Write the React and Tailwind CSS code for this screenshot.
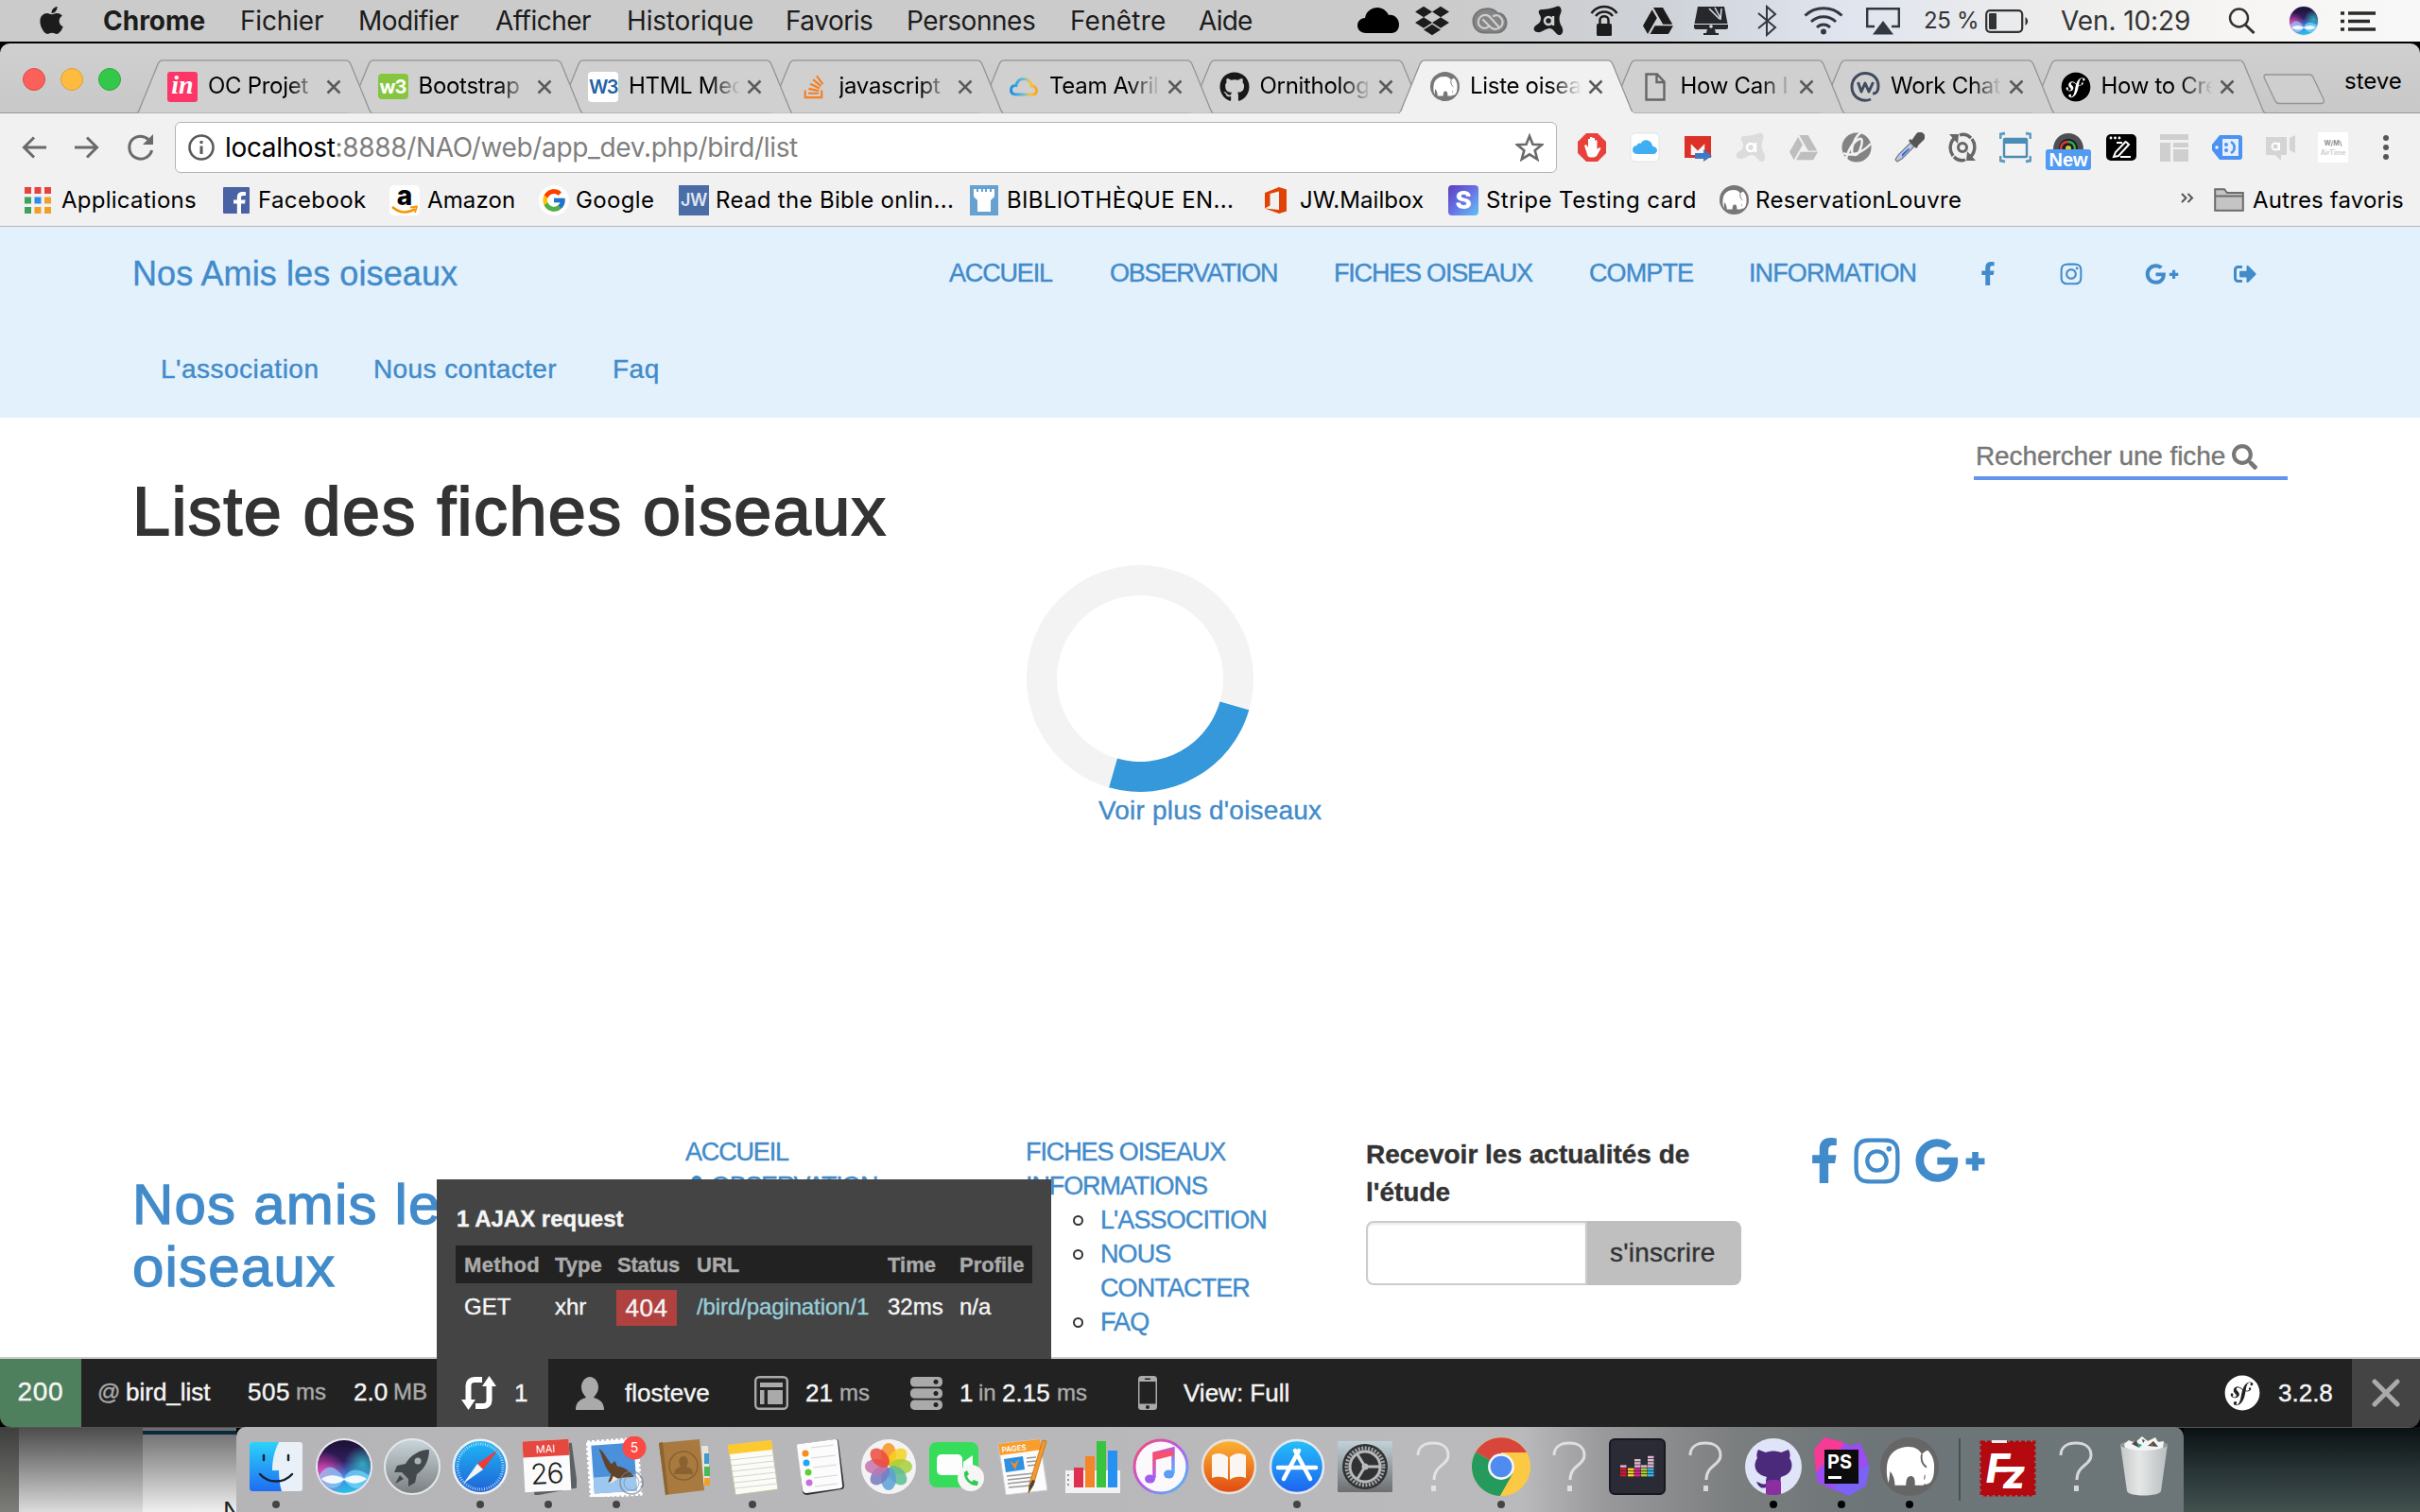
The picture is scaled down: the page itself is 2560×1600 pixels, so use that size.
import React from 'react';
import {
  FaApple, FaDropbox, FaGithub, FaStackOverflow, FaGoogleDrive, FaFacebookF,
  FaInstagram, FaGooglePlusG, FaSignOutAlt, FaSearch, FaSymfony, FaUser,
} from 'react-icons/fa';
import { FcGoogle } from 'react-icons/fc';

/* ---------- shared drawings ---------- */

function Svg({ w, h = w, vb, className = '', children }) {
  return (
    <svg width={w} height={h} viewBox={vb || `0 0 ${w} ${h}`} fill="none" className={`shrink-0 ${className}`}>
      {children}
    </svg>
  );
}

const ELEPHANT =
  'M14 78C11 68 10 55 12 44C15 26 30 16 48 16C60 16 67 21 71 29C74 25 78 23 81 22C89 29 93 42 92 52C92 66 89 78 80 80C75 81 68 78 68 74C72 75 77 73 77 67L76 62C75 66 74 74 74 82L59 82C60 72 58 66 52 66C46 66 44 72 44 82L25 82C25 72 22 64 17 58C16 62 16 70 14 78Z';

function Mamp({ size, disc = '#777' }) {
  return (
    <Svg w={size} vb="0 0 100 100">
      <circle cx="50" cy="50" r="50" fill={disc} />
      <path d={ELEPHANT} fill="#fff" />
      <path d="M71 29C69 38 72 46 79 51" stroke={disc} strokeWidth="3" />
    </Svg>
  );
}

function Siri({ size }) {
  return (
    <Svg w={size} vb="0 0 60 60">
      <defs>
        <linearGradient id="siriBg" x1="0" y1="0" x2="0" y2="1">
          <stop offset="0" stopColor="#1b1035" />
          <stop offset="0.4" stopColor="#33205f" />
          <stop offset="0.65" stopColor="#3d7fd8" />
          <stop offset="1" stopColor="#27c3e8" />
        </linearGradient>
        <radialGradient id="siriPink" cx="0.1" cy="0.65" r="0.45">
          <stop offset="0" stopColor="#ff3fb4" />
          <stop offset="1" stopColor="#ff3fb4" stopOpacity="0" />
        </radialGradient>
        <radialGradient id="siriTeal" cx="0.85" cy="0.45" r="0.35">
          <stop offset="0" stopColor="#2fc9d0" stopOpacity="0.8" />
          <stop offset="1" stopColor="#2fc9d0" stopOpacity="0" />
        </radialGradient>
      </defs>
      <circle cx="30" cy="30" r="30" fill="#e9e9ee" />
      <circle cx="30" cy="30" r="28" fill="url(#siriBg)" />
      <circle cx="30" cy="30" r="28" fill="url(#siriTeal)" />
      <circle cx="30" cy="30" r="28" fill="url(#siriPink)" />
      <path d="M3 40C12 26 20 28 30 42C36 30 48 32 57 40C54 46 50 50 46 53C40 54 34 50 30 44C24 54 16 54 12 51C8 48 5 44 3 40Z" fill="#7fdcff" opacity="0.65" />
      <path d="M6 43C13 38 22 38 30 43C38 38 47 38 54 43C46 49 38 49 30 44C22 50 13 49 6 43Z" fill="#fff" opacity="0.9" />
    </Svg>
  );
}

function SfDisc({ size }) {
  return (
    <span className="flex shrink-0 items-center justify-center rounded-full bg-white">
      <FaSymfony size={size} color="#000" />
    </span>
  );
}

/* ---------- menu bar ---------- */

function MenuBar() {
  return (
    <div className="flex h-[44px] shrink-0 items-center bg-[linear-gradient(to_right,#cbcbcb_0%,#cbcbcb_60%,#cfd3d9_69%,#dfe4ee_76%,#ececec_84%,#f6f5f3_92%,#f8f8f8_100%)] pl-[40px] text-[28px] leading-[44px] whitespace-nowrap text-[#1c1c1c]">
      <FaApple className="h-[33px] w-[29px] shrink-0 -translate-y-[1px]" />
      <span className="ml-[40px] w-[145px] font-bold">Chrome</span>
      <span className="w-[125px] tracking-[-0.16px]">Fichier</span>
      <span className="w-[145px] tracking-[-0.5px]">Modifier</span>
      <span className="w-[139px] tracking-[-0.5px]">Afficher</span>
      <span className="w-[168px] tracking-[-0.17px]">Historique</span>
      <span className="w-[128px] tracking-[-0.48px]">Favoris</span>
      <span className="w-[173px] tracking-[-0.45px]">Personnes</span>
      <span className="w-[136px] tracking-[0.19px]">Fenêtre</span>
      <span className="w-[168px] tracking-[-0.8px]">Aide</span>

      <Svg w={44} h={28}><path d="M9 27C3 27 0 23 0 19C0 14 4 11 8 11C9 4 15 0 21 0C27 0 31 4 33 8C39 7 44 12 44 18C44 23 41 27 36 27Z" fill="#000" /></Svg>
      <FaDropbox className="ml-[17px] h-[38px] w-[36px] shrink-0" />
      <Svg w={38} h={28} className="ml-[24px]">
        <path d="M14 1.500C20 0.500 25 3 27 6C33 6 36.500 11 36.500 16C36.500 22 32 26.500 26 26.500H13C6 26.500 1.500 21 1.500 14C1.500 8 6 2.500 14 1.500Z" fill="#858585" stroke="#757575" strokeWidth="2" />
        <path d="M28 20L20 11C17 7 12 7 9 10C6 13 6 18 9 20C12 23 16 22 18 20M12 13L20 21C23 24 28 23 31 20C33 17 33 13 30 10C28 8 25 8 23 9" stroke="#cfcfd0" strokeWidth="2.200" strokeLinecap="round" />
      </Svg>
      <Svg w={32} className="ml-[27px]">
        <path d="M24 1C28-1 31 3 29 8C27 12 27 17 30 22C33 27 30 32 27 31C23 30 22 24 17 24C13 24 9 29 4 28C-1 27 0 22 4 20C8 18 9 13 7 10C5 7 5 4 9 4C13 4 20 3 24 1Z" fill="#1c1c1c" />
        <circle cx="16" cy="16" r="4" stroke="#d0d2d6" strokeWidth="2.500" /><path d="M21 11V21" stroke="#d0d2d6" strokeWidth="2.500" />
      </Svg>
      <Svg w={30} h={34} className="ml-[28px]">
        <path d="M1.500 9C8-0.500 22-0.500 28.500 9M6 12C10.500 6 19.500 6 24 12" stroke="#1c1c1c" strokeWidth="2.500" />
        <rect x="7" y="20" width="16" height="13" rx="1.500" fill="#1c1c1c" /><path d="M10.500 20V16C10.500 11 19.500 11 19.500 16V20" stroke="#1c1c1c" strokeWidth="2.500" />
      </Svg>
      <FaGoogleDrive className="ml-[26px] h-[32px] w-[32px] shrink-0" />
      <Svg w={36} h={30} className="ml-[22px]">
        <path d="M4 0H32L35.500 18V20.500H0.500V18Z" fill="#26282c" /><path d="M29 2L28 14M16 2L27 13M22 1L28 12" stroke="#dce0e8" strokeWidth="1.500" />
        <path d="M0 18.500H36" stroke="#dce0e8" strokeWidth="1" /><path d="M0 19H36V22Q36 24 34 24H2Q0 24 0 22Z" fill="#26282c" /><circle cx="18" cy="21" r="1.800" fill="#dce0e8" /><path d="M14 24H22L23 28H26V30H10V28H13Z" fill="#26282c" />
      </Svg>
      <Svg w={22} h={34} className="ml-[30px]"><path d="M2 9L20 24L11 32V2L20 10L2 25" stroke="#333740" strokeWidth="2" /></Svg>
      <Svg w={42} h={30} className="ml-[28px]">
        <path d="M1.500 9.500C12-1 30-1 40.500 9.500M8 16C15 9 27 9 34 16M14 22C18 18 24 18 28 22" stroke="#333740" strokeWidth="3" /><circle cx="21" cy="26.500" r="3" fill="#333740" />
      </Svg>
      <Svg w={36} h={29} className="ml-[24px]"><path d="M9 20H1.200V1.200H34.800V20H27" stroke="#333740" strokeWidth="2.400" /><path d="M18 14L29 28.500H7Z" fill="#333740" /></Svg>
      <span className="ml-[25px] w-[64px] text-[24px] tracking-[-0.33px] text-[#333]">25 %</span>
      <Svg w={46} h={25} className="ml-[1px]"><rect x="1.200" y="1.200" width="38" height="22.600" rx="4" stroke="#333" strokeWidth="2.200" /><rect x="4" y="4" width="8" height="17" rx="1" fill="#333" /><path d="M42.500 8C46 10 46 15 42.500 17Z" fill="#333" /></Svg>
      <span className="ml-[34px] w-[177px] tracking-[-0.1px] text-[#333]">Ven. 10:29</span>
      <Svg w={29} h={28}><circle cx="11.500" cy="11" r="9.500" stroke="#333" strokeWidth="2.400" /><path d="M18 18L27.500 27" stroke="#333" strokeWidth="3" /></Svg>
      <span className="ml-[35px]"><Siri size={32} /></span>
      <Svg w={37} h={21} className="ml-[23px]"><path d="M0 2H4M8 2H37M0 10.500H4M8 10.500H31M0 19H4M8 19H37" stroke="#2a2a2a" strokeWidth="3.600" /></Svg>
    </div>
  );
}

/* ---------- tabs ---------- */

const W3Schools = () => (
  <span className="flex h-[27px] w-[32px] items-center justify-center rounded-[4px] bg-[#87c540] text-[20px] leading-none font-bold tracking-[-1px] text-white">w3</span>
);
const tabs = [
  { t: 'OC Projet', i: <span className="flex size-8 items-center justify-center rounded-[3px] bg-[#fd3667] pb-[3px] font-['Liberation_Serif'] text-[28px] leading-none font-bold text-white italic">in</span> },
  { t: 'Bootstrap', i: <W3Schools /> },
  { t: 'HTML Med', i: <span className="flex size-8 items-center justify-center rounded-[4px] bg-white text-[20px] font-semibold tracking-[-1.5px] text-[#1f62a5]">W3</span> },
  { t: 'javascript', i: <FaStackOverflow size={28} color="#f48024" /> },
  { t: 'Team Avril', i: (
    <Svg w={30} h={20}>
      <defs><linearGradient id="cl"><stop offset="0" stopColor="#1a8fe0" /><stop offset="0.5" stopColor="#6dc0d8" /><stop offset="0.75" stopColor="#f9c23c" /><stop offset="1" stopColor="#f7a823" /></linearGradient></defs>
      <path d="M7 18C3 18 1.500 15.500 1.500 13C1.500 10 4 8 7 8.500C8 4 11 1.500 15 1.500C20 1.500 23 5 23 9C26 9 28.500 10.500 28.500 13.500C28.500 16 27 18 24 18Z" stroke="url(#cl)" strokeWidth="3" />
    </Svg>) },
  { t: 'Ornitholog', i: <FaGithub size={32} color="#191717" /> },
  { t: 'Liste oisea', i: <Mamp size={31} />, active: true },
  { t: 'How Can I', i: <Svg w={22} h={30}><path d="M1.500 1.500H13L20.500 9.500V28.500H1.500ZM12.500 2V10H20" stroke="#666" strokeWidth="2.400" /></Svg> },
  { t: 'Work Chat', i: <Svg w={32}><path d="M22 29C13 33 2 27 2 16C2 7 9 1.500 16 1.500C25 1.500 30 8 30 15C30 21 28 23 24 23" stroke="#414b5f" strokeWidth="3" /><path d="M8.500 11L12 21L16 12L20 21L24.500 11" stroke="#414b5f" strokeWidth="3" strokeLinejoin="round" /></Svg> },
  { t: 'How to Cre', i: <SfDisc size={32} /> },
];

function Tab({ t, i, active }) {
  return (
    <div className={`relative h-[57px] w-[222.5px] shrink-0 ${active ? 'z-10' : ''}`}>
      <svg width="250" height="57" viewBox="0 0 250 57" className="absolute top-0 left-0">
        <path
          d="M0.500 56.500C2 55 3 52 4 49L22 5C23.500 1.500 24.500 0.800 27 0.800H221C223.500 0.800 224.500 1.500 226 5L244 49C245 52 246 55 248 56.500"
          fill={active ? '#f1f1f1' : '#d0d0d0'} stroke="#949494" strokeWidth="1.3"
        />
        {active && <path d="M1 56.500H248" stroke="#f1f1f1" strokeWidth="2" />}
      </svg>
      <div className="relative flex h-[57px] items-center pl-[32px]">
        <span className="flex w-8 shrink-0 items-center justify-center">{i}</span>
        <span className="ml-[11px] w-[125px] -translate-y-px text-[24px] leading-[32px] tracking-[-0.3px] whitespace-nowrap text-black [mask-image:linear-gradient(to_right,black_68%,transparent_94%)]">{t}</span>
        <Svg w={16}><path d="M1.500 1.500L14.500 14.500M14.500 1.500L1.500 14.500" stroke="#5a5a5a" strokeWidth="2.500" /></Svg>
      </div>
    </div>
  );
}

function TabStrip() {
  return (
    <div className="flex h-[74px] items-start rounded-t-[10px] border-b border-[#999] bg-linear-to-b from-[#d0d0d0] to-[#c8c8c8]">
      <div className="flex w-[145px] gap-[16px] pt-[26px] pl-[24px]">
        <span className="size-[24px] rounded-full border border-[#df4744] bg-[#fc605b]" />
        <span className="size-[24px] rounded-full border border-[#de9f34] bg-[#fdbc40]" />
        <span className="size-[24px] rounded-full border border-[#27aa35] bg-[#34c84a]" />
      </div>
      <div className="mt-[17px] flex w-[2249px] flex-row-reverse justify-end">
        {[...tabs].reverse().map((x) => <Tab key={x.t} {...x} />)}
      </div>
      <Svg w={66} h={33} className="mt-[32px]"><path d="M3 1H49C51.500 1 52.500 2 53.500 5L64 27C65 30 64 31.500 61.500 31.500H17C14 31.500 13 30 12 27L1.500 5C0.500 2.500 1 1 3 1Z" fill="#cfcfcf" stroke="#949494" strokeWidth="1.3" /></Svg>
      <span className="mt-[24px] ml-[20px] text-[24px] leading-[32px] text-black">steve</span>
    </div>
  );
}

/* ---------- toolbar ---------- */

const extensions = [
  <Svg w={32}><path d="M10 1H22L31 10V22L22 31H10L1 22V10Z" fill="#e8413c" /><path d="M10 20L8 14L10 13L12 16V7H14V14V5H16.500V14V6H19V15V8.500H21.500V18L24 16L25.500 17L21 25C19 27 13 27 11.500 25Z" fill="#fff" /></Svg>,
  <Svg w={32}><rect x="1" y="1" width="30" height="30" rx="5" fill="#fff" stroke="#e3e3e3" /><path d="M8 23C5 23 3 21 3 18.500C3 16 5 14 7.500 14C8 12 10 11 11.500 12C13 9 16 7.500 19 8.500C22 9.500 24 12 24 14.500C27 15 29 17 29 19C29 21 27 23 25 23Z" fill="#41aef4" /></Svg>,
  <Svg w={32}><rect x="2" y="4" width="28" height="23" fill="#dd3127" /><path d="M7 8L16 16L25 8V24H7Z" fill="#f6f6f6" /><path d="M7 24V8L16 17L25 8V24" stroke="#dd3127" strokeWidth="3.500" /><path d="M13 22H22V18L31 25L22 31V28H13Z" fill="#3f78c3" /></Svg>,
  <Svg w={32}><path d="M24 1C28-1 31 3 29 8C27 12 27 17 30 22C33 27 30 32 27 31C23 30 22 24 17 24C13 24 9 29 4 28C-1 27 0 22 4 20C8 18 9 13 7 10C5 7 5 4 9 4C13 4 20 3 24 1Z" fill="#dcdcdc" /><circle cx="16" cy="16" r="4" stroke="#fff" strokeWidth="2.500" /><path d="M21 11V21" stroke="#fff" strokeWidth="2.500" /></Svg>,
  <FaGoogleDrive size={30} color="#bebebe" />,
  <Svg w={32}><circle cx="16" cy="16" r="15.500" fill="#838383" /><path d="M21 0C12 6 8 24 14 24C20 24 25 4 19 7C12 10 6 20 4 32M2 22C10 26 22 22 31 12" stroke="#f1f1f1" strokeWidth="2.500" /></Svg>,
  <Svg w={32}><path d="M17 11L21 15L8 28L3 31L1 29L4 24Z" fill="#b9c7e6" stroke="#777" strokeWidth="1.200" /><path d="M8 23L15 17L16 18L8 26Z" fill="#2f61e4" /><path d="M16 8L24 16M19 10L24 3C27-1 33 3 30 7L23 14Z" stroke="#555" strokeWidth="3" fill="#555" /></Svg>,
  <Svg w={32}><path d="M9 5C3 9 1 18 6 25M23 27C29 23 31 14 26 7M13 3C18 1 22 3 25 6M19 29C14 31 10 29 7 26" stroke="#666" strokeWidth="3.400" /><path d="M2 2L12 2L11 12ZM30 30L20 30L21 20Z" fill="#666" /><circle cx="16" cy="16" r="4.500" stroke="#666" strokeWidth="3" /></Svg>,
  <Svg w={34}><path d="M1 8V3L6 2M28 2L33 3V8M33 26V31L28 32M6 32L1 31V26" stroke="#5e9cc0" strokeWidth="3" /><rect x="5" y="8" width="24" height="19" rx="1" fill="#f4f4f4" stroke="#4b8db5" strokeWidth="2.400" /><path d="M5 10.500H29" stroke="#4b8db5" strokeWidth="5" /></Svg>,
  <span className="flex w-[50px] flex-col items-center pt-[8px]">
    <Svg w={34} h={18}><path d="M1 18C1 8 8 1 17 1C26 1 33 8 33 18Z" fill="#4d4f54" /><path d="M7 18C7 11 11 7 17 7C23 7 27 11 27 18Z" fill="#1b1d1f" /><path d="M9 18C9 13 12 10 17 10" stroke="#e03b35" strokeWidth="2.500" /><path d="M17 10C21 10 24 13 24 18" stroke="#2fb24c" strokeWidth="2.500" /><circle cx="17" cy="17" r="3" fill="#d9c234" /></Svg>
    <span className="h-[22px] w-[48px] rounded-[3px] bg-[#529bf2] text-center font-['Liberation_Sans'] text-[20px] leading-[23px] font-bold text-white">New</span>
  </span>,
  <Svg w={32}><rect y="2" width="32" height="28" rx="5" fill="#000" /><circle cx="5" cy="6" r="1.400" fill="#fff" /><circle cx="9.500" cy="6" r="1.400" fill="#fff" /><circle cx="14" cy="6" r="1.400" fill="#fff" /><path d="M11 11H17M21 10L24 13L13 25L8 26L10 21L21 9.500M15 26H26" stroke="#fff" strokeWidth="2" /></Svg>,
  <Svg w={30} h={30}><path d="M0 1H30V7H0ZM0 10H11V30H0ZM14 10H30V15H14ZM14 17H30V30H14Z" fill="#cfcfcf" /></Svg>,
  <Svg w={32} h={26}><path d="M8 0H29Q32 0 32 3V23Q32 26 29 26H8L0 16V10Z" fill="#4b92f4" /><path d="M11 4H28V22H11Z" fill="#e6effc" /><circle cx="15" cy="10" r="2" fill="#4b92f4" /><circle cx="15" cy="16" r="2" fill="#4b92f4" /><path d="M20 7C25 10 25 16 20 19" stroke="#4b92f4" strokeWidth="2.500" /><circle cx="5" cy="13" r="1.700" fill="#fff" /></Svg>,
  <Svg w={34} h={28}><path d="M2 3H24V22H18V28L12 22H2ZM27 4L33 1V20L27 17Z" fill="#d4d4d4" /><circle cx="12" cy="13" r="3.500" stroke="#fff" strokeWidth="2" /><path d="M16 9V17" stroke="#fff" strokeWidth="2" /></Svg>,
  <span className="flex size-8 flex-col items-center justify-center gap-[3px] bg-white text-[7px] leading-none font-bold"><span className="text-[#8e8e8e]">W/M\</span><span className="text-[#cfcfcf]">AirTime</span></span>,
];

function Toolbar() {
  return (
    <div className="flex h-[72px] items-center bg-[#f1f1f1] pl-[23px]">
      <Svg w={26} h={24}><path d="M26 12H3M13 1.500L2.500 12L13 22.500" stroke="#6a6a6a" strokeWidth="3" /></Svg>
      <Svg w={26} h={24} className="ml-[30px]"><path d="M0 12H23M13 1.500L23.500 12L13 22.500" stroke="#6a6a6a" strokeWidth="3" /></Svg>
      <Svg w={28} h={28} className="ml-[30px]"><path d="M22 5.500C14-1 2 3 1.800 14C2 24 12 29 20 24.500C23 22.500 25 20 25.500 17" stroke="#6a6a6a" strokeWidth="3" /><path d="M27 0V11H16Z" fill="#6a6a6a" /></Svg>
      <div className="ml-[22px] flex h-[54px] w-[1462px] items-center rounded-[6px] border border-[#b3b3b3] bg-white pl-[13px]">
        <Svg w={28}><circle cx="14" cy="14" r="12.500" stroke="#5a5a5a" strokeWidth="2.600" /><path d="M14 12.500V21M14 7V10" stroke="#5a5a5a" strokeWidth="3" /></Svg>
        <span className="ml-[11px] grow text-[28px] leading-[52px] tracking-[-0.34px] text-[#7f7f7f]"><span className="text-black">localhost</span>:8888/NAO/web/app_dev.php/bird/list</span>
        <Svg w={30} h={30} className="mr-[13px]"><path d="M15 3L18.500 11.700L28 12.300L20.700 18.200L23.200 27.500L15 22.300L6.800 27.500L9.300 18.200L2 12.300L11.500 11.700Z" stroke="#6a6a6a" strokeWidth="2.600" /></Svg>
      </div>
      <div className="ml-[9px] flex">
        {extensions.map((e, k) => <span key={k} className="flex h-[50px] w-[56px] items-center justify-center">{e}</span>)}
      </div>
      <div className="ml-[25px] flex flex-col gap-[4px]">
        <span className="size-[6px] rounded-full bg-[#555]" /><span className="size-[6px] rounded-full bg-[#555]" /><span className="size-[6px] rounded-full bg-[#555]" />
      </div>
    </div>
  );
}

function Bookmarks() {
  return (
    <div className="flex h-[48px] items-start border-b border-[#b4b4b4] bg-[#f1f1f1] pl-[26px] text-[24px] whitespace-nowrap text-black">
      <div className="flex h-[39px] w-full items-center">
        <Svg w={28} h={28}>
          <path d="M0 0H7V7H0ZM10.500 0H17.500V7H10.500ZM21 0H28V7H21Z" fill="#e8423c" />
          <path d="M0 10.500H7V17.500H0ZM0 21H7V28H0Z" fill="#3fa25a" /><path d="M10.500 10.500H17.500V17.500H10.500Z" fill="#2b8cf0" /><path d="M21 10.500H28V17.500H21ZM10.500 21H17.500V28H10.500ZM21 21H28V28H21Z" fill="#f0a028" />
        </Svg>
        <span className="ml-[11px] w-[171px] tracking-[0.25px]">Applications</span>
        <Svg w={28}><rect width="28" height="28" rx="1" fill="#4862a3" /><path d="M19 28V17.500H23L23.600 13.500H19V11C19 9.800 19.500 9 21.300 9H24V5.200C23 5 22 5 20.500 5C17 5 14.800 7 14.800 10.500V13.500H11V17.500H14.800V28Z" fill="#fff" /></Svg>
        <span className="ml-[9px] w-[139px] tracking-[0.39px]">Facebook</span>
        <span className="flex size-8 items-center justify-center rounded-[5px] bg-white">
          <Svg w={28} h={30}>
            <text x="14" y="20" textAnchor="middle" fontFamily="Inter" fontWeight="800" fontSize="28" fill="#000">a</text>
            <path d="M1 22C9 29 18 29 25 24" stroke="#f79400" strokeWidth="2.600" /><path d="M20 22.500L27 21.500L25 28" stroke="#f79400" strokeWidth="1.800" />
          </Svg>
        </span>
        <span className="ml-[8px] w-[118px] tracking-[0.13px]">Amazon</span>
        <span className="flex h-[32px] w-[32px] items-center justify-center rounded-full bg-white"><FcGoogle size={28} /></span>
        <span className="ml-[7px] w-[109px] tracking-[0.36px]">Google</span>
        <span className="flex size-8 items-center justify-center bg-[#4a6da7] text-[18px] leading-none font-semibold tracking-[-0.5px] text-[#dfe6f1]">JW</span>
        <span className="ml-[7px] w-[269px] tracking-[0.32px]">Read the Bible onlin...</span>
        <Svg w={30} h={32}><rect width="30" height="32" fill="#67a1cf" /><path d="M4 4H7V7H9V4H12V7H14V4H16V7H18V4H21V7H23V4H26V12L22 16V28H8V16L4 12Z" fill="#fff" /></Svg>
        <span className="ml-[9px] w-[273px] tracking-[0.35px]">BIBLIOTHÈQUE EN...</span>
        <Svg w={24} h={28}><path d="M0 6L15 0L23 2.500V25.500L15 28L0 22.500L15 24V4.500L5.500 7V19.500L0 22.500Z" fill="#e04306" /></Svg>
        <span className="ml-[13px] w-[157px] tracking-[0.08px]">JW.Mailbox</span>
        <span className="flex size-8 items-center justify-center rounded-[4px] bg-linear-to-br from-[#5b3fbd] via-[#6772e5] to-[#5cc4f0] text-[26px] leading-none font-extrabold text-white">S</span>
        <span className="ml-[8px] w-[247px] tracking-[0.45px]">Stripe Testing card</span>
        <Mamp size={31} />
        <span className="ml-[7px] w-[450px] tracking-[0.34px]">ReservationLouvre</span>
        <Svg w={14} h={11} className="-translate-y-[2px]"><path d="M1 1L5.500 5.500L1 10M7.500 1L12 5.500L7.500 10" stroke="#555" strokeWidth="2" /></Svg>
        <Svg w={32} h={25} className="ml-[21px]"><path d="M1.200 23.800V1.200H11L14 5H30.800V23.800Z" fill="#c4c4c4" stroke="#6b6b6b" strokeWidth="2" /><path d="M1 8.500H31" stroke="#6b6b6b" strokeWidth="2" /></Svg>
        <span className="ml-[9px] tracking-[0.16px]">Autres favoris</span>
      </div>
    </div>
  );
}

/* ---------- web page ---------- */

function SiteNav() {
  return (
    <nav className="h-[202px] bg-[#e3f1fd] text-[#428bca]">
      <div className="flex h-[99px] items-center pl-[140px] text-[27px] whitespace-nowrap">
        <span className="w-[864px] text-[36px] tracking-[0.1px]">Nos Amis les oiseaux</span>
        <span className="w-[170px] tracking-[-1.17px]">ACCUEIL</span>
        <span className="w-[237px] tracking-[-1.2px]">OBSERVATION</span>
        <span className="w-[270px] tracking-[-1.2px]">FICHES OISEAUX</span>
        <span className="w-[169px] tracking-[-0.9px]">COMPTE</span>
        <span className="w-[243px] tracking-[-0.9px]">INFORMATION</span>
        <FaFacebookF className="h-[25px] w-[20px]" />
        <FaInstagram className="ml-[65px] h-[26px] w-[26px]" />
        <FaGooglePlusG className="ml-[65px] h-[36px] w-[36px]" />
        <FaSignOutAlt className="ml-[58px] h-[26px] w-[24px]" />
      </div>
      <div className="flex h-[103px] items-center pl-[170px] text-[28px] tracking-[0.5px]">
        <span className="w-[225px]">L'association</span>
        <span className="w-[253px] tracking-[0.4px]">Nous contacter</span>
        <span>Faq</span>
      </div>
    </nav>
  );
}

function SiteFooter() {
  return (
    <footer className="mt-[322px] flex pl-[140px] text-[27px] leading-[36px] text-[#428bca]">
      <div className="mt-[42px] w-[585px] pr-[180px] text-[60px] leading-[66px] tracking-[1.2px] [-webkit-text-stroke:1.3px]">Nos amis les oiseaux</div>
      <div className="mt-px w-[360px]">
        <div className="tracking-[-1.17px]">ACCUEIL</div>
        <div className="flex items-center tracking-[-1.3px]"><FaUser className="mr-[5px] ml-[2px] h-[22px] w-[20px]" />OBSERVATION</div>
      </div>
      <div className="mt-px w-[360px] tracking-[-1.1px]">
        <div>FICHES OISEAUX</div>
        <div>INFORMATIONS</div>
        <ul className="pl-[50px]">
          {["L'ASSOCITION", 'NOUS CONTACTER', 'FAQ'].map((s) => (
            <li key={s} className="flex items-start"><span className="mt-[13px] mr-[18px] size-[11px] shrink-0 rounded-full border-2 border-[#333]" /><span className="w-[160px] tracking-[-0.9px]">{s}</span></li>
          ))}
        </ul>
      </div>
      <div className="w-[470px] pt-[2px] text-[#333]">
        <div className="w-[380px] text-[28px] leading-[40px] font-bold">Recevoir les actualités de l'étude</div>
        <div className="mt-[10px] flex h-[68px] text-[28px]">
          <span className="w-[234px] rounded-l-[8px] border-2 border-[#ccc] bg-white shadow-[inset_0_2px_2px_rgba(0,0,0,0.075)]" />
          <span className="flex w-[163px] items-center rounded-r-[8px] bg-[#bfbfbf] pl-[24px] tracking-[0.2px]">s'inscrire</span>
        </div>
      </div>
      <div className="flex h-[56px] items-center">
        <FaFacebookF className="h-[52px] w-[30px]" />
        <FaInstagram className="ml-[14px] h-[55px] w-[53px]" />
        <FaGooglePlusG className="ml-[13px] h-[74px] w-[76px]" />
      </div>
    </footer>
  );
}

function AjaxPanel() {
  return (
    <div className="absolute top-[1008px] left-[462px] z-20 h-[190px] w-[650px] bg-[#444] pl-[20px] text-[24px] whitespace-nowrap text-[#f5f5f5]">
      <div className="h-[70px] pt-[22px] pl-px leading-[40px] font-bold">1 AJAX request</div>
      <div className="flex h-[40px] w-[610px] items-center bg-[#222] pl-[9px] text-[22px] font-bold text-[#aaa]">
        <span className="w-[96px] tracking-[0.3px]">Method</span><span className="w-[66px]">Type</span><span className="w-[84px] tracking-[-0.2px]">Status</span>
        <span className="w-[202px]">URL</span><span className="w-[76px]">Time</span><span>Profile</span>
      </div>
      <div className="mt-[6px] flex h-[40px] items-center pl-[9px]">
        <span className="w-[96px] -translate-y-px">GET</span><span className="w-[65px] -translate-y-px">xhr</span>
        <span className="mr-[21px] flex h-[38px] w-[64px] items-center justify-center bg-[#b0413e] text-[26px] tracking-[0.5px]">404</span>
        <span className="w-[202px] -translate-y-px tracking-[-0.11px] text-[#99cdd8]">/bird/pagination/1</span><span className="w-[76px] -translate-y-px">32ms</span><span className="-translate-y-px">n/a</span>
      </div>
    </div>
  );
}

function DebugBar() {
  return (
    <div className="flex h-[75px] shrink-0 overflow-hidden rounded-b-[12px] border-t-2 border-b border-t-[#c9cbca] border-b-[#555] bg-[#222] text-[26px] leading-[70px] whitespace-nowrap text-[#f5f5f5]">
      <span className="w-[86px] bg-[#4f805d] text-center text-[28px] tracking-[0.7px]">200</span>
      <span className="ml-[17px] w-[30px] text-[24px] text-[#aaa]">@</span><span className="w-[129px]">bird_list</span>
      <span className="w-[51px] tracking-[0.5px]">505</span><span className="w-[61px] text-[24px] text-[#aaa]">ms</span>
      <span className="w-[42px]">2.0</span><span className="w-[46px] text-[24px] text-[#aaa]">MB</span>
      <span className="flex w-[118px] items-center bg-[#444] pl-[26px]">
        <Svg w={37} h={36}>
          <path d="M22 4H14C10 4 7.500 6.500 7.500 10V26M15 32H23C27 32 29.500 29.500 29.500 26V10" stroke="#fff" strokeWidth="6" />
          <path d="M0 25H15L7.500 36Z" fill="#fff" /><path d="M22 11H37L29.500 0Z" fill="#fff" />
        </Svg>
        <span className="ml-[19px]">1</span>
      </span>
      <span className="flex items-center">
        <Svg w={30} h={35} className="ml-[29px]"><path d="M15 0C20 0 24 5 24 11C24 16 21 19 19 22C26 24 30 27 30 35H0C0 27 4 24 11 22C9 19 6 16 6 11C6 5 10 0 15 0Z" fill="#aaa" /></Svg>
        <span className="ml-[22px] w-[137px]">flosteve</span>
        <Svg w={36} h={36}><rect x="1.200" y="1.200" width="33.600" height="33.600" rx="4" stroke="#aaa" strokeWidth="2.400" /><path d="M6 7H30V12H6ZM6 15H10.500V30H6ZM14 15H30V30H14Z" fill="#aaa" /></Svg>
        <span className="ml-[18px] w-[36px]">21</span><span className="w-[75px] text-[24px] text-[#aaa]">ms</span>
        <Svg w={34} h={35}><rect width="34" height="10.500" rx="4.500" fill="#aaa" /><rect y="12.200" width="34" height="10.500" rx="4.500" fill="#aaa" /><rect y="24.400" width="34" height="10.500" rx="4.500" fill="#aaa" /><circle cx="27" cy="5.200" r="2.500" fill="#222" /><circle cx="27" cy="17.400" r="2.500" fill="#222" /><circle cx="27" cy="29.600" r="2.500" fill="#222" /></Svg>
        <span className="ml-[18px] w-[20px]">1</span><span className="w-[25px] text-[24px] text-[#aaa]">in</span><span className="w-[58px]">2.15</span><span className="w-[86px] text-[24px] text-[#aaa]">ms</span>
        <Svg w={20} h={36}><rect width="20" height="36" rx="3.500" fill="#aaa" /><rect x="1.500" y="6" width="17" height="23.500" fill="#222" /><rect x="7" y="2.500" width="6" height="1.500" fill="#222" /><circle cx="10" cy="33" r="2" fill="#222" /></Svg>
        <span className="ml-[28px]">View: Full</span>
      </span>
      <span className="ml-auto flex items-center"><FaSymfony size={38} color="#fff" /><span className="ml-[19px] w-[78px]">3.2.8</span></span>
      <span className="flex w-[72px] items-center justify-center bg-[#444]"><Svg w={30} h={30}><path d="M3 3L27 27M27 3L3 27" stroke="#aaa" strokeWidth="5" strokeLinecap="round" /></Svg></span>
    </div>
  );
}

/* ---------- dock ---------- */

const Question = () => (
  <Svg w={60}><path d="M14 18C14 9 21 5 30 5C39 5 46 9 46 18C46 29 31 28 31 44" stroke="#e9e9e9" strokeWidth="3" opacity="0.85" /><rect x="28" y="50" width="5" height="6" fill="#e9e9e9" opacity="0.85" /></Svg>
);

const dock = [
  { dot: true, i: <Svg w={60}><defs><linearGradient id="fi" x1="0" y1="0" x2="0" y2="1"><stop offset="0" stopColor="#2cd3f9" /><stop offset="1" stopColor="#1f6df2" /></linearGradient></defs><rect x="2" y="4" width="56" height="52" rx="3" fill="#e9f0f8" /><path d="M5 4H33C28 14 26 24 26 34H33C33 42 34 50 36 56H5Q2 56 2 53V7Q2 4 5 4Z" fill="url(#fi)" /><path d="M17 18V23M43 18V23" stroke="#152238" strokeWidth="2.500" strokeLinecap="round" /><path d="M13 38C22 48 38 48 47 38" stroke="#152238" strokeWidth="2.500" strokeLinecap="round" /></Svg> },
  { i: <Siri size={60} /> },
  { i: <Svg w={60}><defs><linearGradient id="ro" x1="0" y1="0" x2="0" y2="1"><stop offset="0" stopColor="#c9d6dc" /><stop offset="1" stopColor="#7b7e80" /></linearGradient></defs><circle cx="30" cy="30" r="29" fill="url(#ro)" stroke="#e3e7e9" strokeWidth="2" /><path d="M48 12C38 12 28 18 23 27L14 29L11 36L19 36L26 43V51L33 47L35 38C44 32 48 22 48 12Z" fill="#43484c" /><path d="M17 39L12 48L21 43Z" fill="#43484c" /><circle cx="36" cy="24" r="3.500" fill="#a9b2b7" /></Svg> },
  { dot: true, i: <Svg w={60}><defs><linearGradient id="sa" x1="0" y1="0" x2="0" y2="1"><stop offset="0" stopColor="#1fb6f5" /><stop offset="1" stopColor="#1f63d6" /></linearGradient></defs><circle cx="30" cy="30" r="29.500" fill="#eef1f4" /><circle cx="30" cy="30" r="27" fill="url(#sa)" /><circle cx="30" cy="30" r="24" stroke="#cfe6fb" strokeWidth="3" strokeDasharray="0.8 1.7" /><path d="M49 12L33 33L27 27Z" fill="#f03b34" /><path d="M12 48L27 27L33 33Z" fill="#f4f4f4" /></Svg> },
  { dot: true, i: <Svg w={60}><g transform="rotate(-3 30 30)"><path d="M9 8L56 6L60 54L14 60Z" fill="#5a6266" /><rect x="4" y="2" width="49" height="54" fill="#fbfbfb" /><rect x="4" y="2" width="49" height="17" fill="#e6483f" /></g><text x="28" y="15" textAnchor="middle" fontFamily="Inter" fontSize="11" fill="#fff" transform="rotate(-3 30 30)">MAI</text><text x="28" y="48" textAnchor="middle" fontFamily="Inter" fontWeight="300" fontSize="30" letterSpacing="-1" fill="#1d1d1d" transform="rotate(-3 30 30)">26</text></Svg> },
  { dot: true, i: <Svg w={64} h={64}><g transform="rotate(-4 30 32)"><rect x="5" y="6" width="49" height="55" fill="#4a90db" stroke="#fbfbfb" strokeWidth="4" /><rect x="3" y="4" width="53" height="59" stroke="#fff" strokeWidth="3" strokeDasharray="3 2" /><rect x="7" y="42" width="45" height="17" fill="#9dc7ef" /><path d="M15 12C19 14 23 24 27 29L31 26L33 32C39 32 46 38 50 44C43 45 36 43 30 46L22 48L26 40C20 34 18 22 15 12Z" fill="#60432a" /><path d="M28 42L24 50L33 45Z" fill="#efe8dc" /></g><circle cx="48" cy="49" r="12" stroke="#6f7f90" strokeWidth="1.500" opacity="0.7" /><circle cx="48" cy="49" r="8" stroke="#6f7f90" strokeWidth="1" opacity="0.6" /><circle cx="51" cy="12" r="12.500" fill="#fb4a44" /><text x="51" y="17" textAnchor="middle" fontFamily="Inter" fontSize="14" fill="#fff">5</text></Svg> },
  { i: <Svg w={60}><path d="M48 8H55L57 50H50Z" fill="#e9e4d8" /><path d="M51 16H56V27H51Z" fill="#3d9ad2" /><path d="M51 30H57V40H51Z" fill="#4cb85c" /><path d="M51 42H57V50H51Z" fill="#efa02d" /><path d="M3 5L46 1L51 55L10 60Z" fill="#a97a40" /><path d="M3 5L7 4L13 59L10 60Z" fill="#8d6430" /><circle cx="29" cy="29" r="15" stroke="#8a6231" strokeWidth="1.500" /><path d="M29 19C34 19 35 25 32 30C38 32 39 34 39 38H19C19 34 21 32 26 30C23 25 24 19 29 19Z" fill="#8a6231" /></Svg> },
  { dot: true, i: <Svg w={60}><path d="M4 7L50 2L57 54L12 60Z" fill="#fbfbf8" stroke="#c7bf9d" strokeWidth="1" /><path d="M4 7L50 2L51 12L5 17Z" fill="#fdc92e" /><path d="M7 23L52 18M8 29L53 24M9 35L54 30M10 41L55 36M11 47L56 42M11 53L56 48" stroke="#d4d4d4" strokeWidth="1.200" /></Svg> },
  { i: <Svg w={60}><path d="M6 8Q6 6 8 6L46 1Q49 1 49 4L55 50Q55 54 52 54L16 60Q12 60 11 57Z" fill="#2f3236" /><path d="M5 8Q5 6 7 6L45 1Q48 1 48 3L53 49Q54 52 51 53L15 58Q12 58 11 55Z" fill="#fcfcfc" /><circle cx="14" cy="16" r="3.500" fill="#fb8c1e" /><circle cx="15" cy="26" r="3.500" fill="#1ea7f2" /><circle cx="17" cy="36" r="3.500" fill="#5fce35" /><circle cx="18" cy="47" r="3.500" fill="#c66fe0" /><path d="M20 10L44 7M20 21L46 18M22 31L47 28M23 42L48 39M24 51L48 48" stroke="#d6d6d6" strokeWidth="1.200" /></Svg> },
  { i: <Svg w={60}><circle cx="30" cy="30" r="29" fill="#f3f3f3" />{['#f7931e', '#f5d21f', '#a6cf3c', '#5dbb94', '#5a9fd8', '#7a78be', '#c573ab', '#ec4a3c'].map((c, k) => <ellipse key={c} cx="30" cy="17" rx="8" ry="12" fill={c} opacity="0.85" transform={`rotate(${k * 45} 30 30)`} />)}</Svg> },
  { i: <Svg w={60}><rect x="1" y="4" width="52" height="48" rx="8" fill="#36dd5a" /><rect x="9" y="17" width="27" height="22" rx="5" fill="#fdfdfd" /><path d="M37 25L47 18V38L37 31Z" fill="#fdfdfd" /><circle cx="45" cy="42" r="14" fill="#f6f6f6" /><path d="M38 36C37 43 44 51 52 50L53 46L48 44L46 46C44 45 42 43 41 40L43 38L41 34Z" fill="#2ecc50" /></Svg> },
  { i: <Svg w={60}><path d="M2 6L46 1L54 55L10 60Z" fill="#fbfbfb" stroke="#ccc" /><path d="M2 6L46 1L48 12L4 18Z" fill="#f99e2b" /><text x="6" y="15" fontFamily="Inter" fontWeight="600" fontSize="8" fill="#fff" transform="rotate(-6 6 15)">PAGES</text><path d="M8 22L28 19L30 33L10 36Z" fill="#2f8fe0" /><path d="M14 24L19 27L24 22L20 33Z" fill="#f68b22" /><path d="M32 21L42 20M32 25L42 24M33 29L43 28M11 40L40 37M12 44L40 41M12 48L38 45M13 52L36 50" stroke="#999" strokeWidth="1.300" /><path d="M49 2L53 3L39 50L34 58L35 48Z" fill="#f39a2b" stroke="#c26d10" strokeWidth="0.800" /><path d="M38 44L41 45L39 50L34 58L35 50Z" fill="#444" /></Svg> },
  { i: <Svg w={60}><rect x="1" y="34" width="58" height="24" fill="#f2f2f2" /><rect x="10" y="31" width="10" height="21" fill="#e0304f" /><rect x="22" y="19" width="10" height="33" fill="#f4862a" /><rect x="34" y="3" width="10" height="49" fill="#38c43f" /><rect x="46" y="13" width="10" height="39" fill="#2591f2" /><path d="M4 38V40M4 43V45M4 48V50" stroke="#999" strokeWidth="2" /></Svg> },
  { i: <Svg w={60}><defs><linearGradient id="it" x1="0" y1="0" x2="1" y2="1"><stop offset="0" stopColor="#fb4a6b" /><stop offset="0.5" stopColor="#b65ce8" /><stop offset="1" stopColor="#3fc7fb" /></linearGradient></defs><circle cx="30" cy="30" r="28" fill="#fbf9fc" stroke="url(#it)" strokeWidth="3" /><path d="M23 42V16L43 11V37" stroke="url(#it)" strokeWidth="3.500" /><path d="M23 20L43 15" stroke="#f8506e" strokeWidth="6" /><ellipse cx="18.500" cy="43" rx="5.500" ry="4.500" fill="#a25cf0" /><ellipse cx="38.500" cy="38" rx="5.500" ry="4.500" fill="#5b9cf5" /></Svg> },
  { i: <Svg w={60}><defs><linearGradient id="ib" x1="0" y1="0" x2="0" y2="1"><stop offset="0" stopColor="#fcb432" /><stop offset="1" stopColor="#e04a12" /></linearGradient></defs><circle cx="30" cy="30" r="28" fill="url(#ib)" stroke="#e7e2de" strokeWidth="2.500" /><path d="M29 20C24 15 17 15 12 18V42C17 40 25 40 29 44ZM31 20C36 15 43 15 48 18V42C43 40 35 40 31 44Z" fill="#fbf6f1" /></Svg> },
  { dot: true, i: <Svg w={60}><defs><linearGradient id="as" x1="0" y1="0" x2="0" y2="1"><stop offset="0" stopColor="#24c0fa" /><stop offset="1" stopColor="#1d62f0" /></linearGradient></defs><circle cx="30" cy="30" r="28" fill="url(#as)" stroke="#e4e8ee" strokeWidth="2.500" /><path d="M32 13L16 43M28 13L44 43M10 31H50" stroke="#fff" strokeWidth="4.500" strokeLinecap="round" /></Svg> },
  { i: <Svg w={60}><defs><linearGradient id="pr" x1="0" y1="0" x2="0" y2="1"><stop offset="0" stopColor="#c2d2d9" /><stop offset="1" stopColor="#6c6e70" /></linearGradient></defs><rect x="1" y="3" width="58" height="54" rx="1.500" fill="url(#pr)" /><circle cx="30" cy="30" r="24" fill="#303234" /><circle cx="30" cy="30" r="19.500" stroke="#a3a6a8" strokeWidth="4" strokeDasharray="2 1.500" /><circle cx="30" cy="30" r="16" stroke="#b9bbbd" strokeWidth="3" /><path d="M30 30H45M30 30L22 17M30 30L22 43" stroke="#b9bbbd" strokeWidth="3" /><circle cx="30" cy="30" r="3.500" fill="#b9bbbd" /></Svg> },
  { i: <Question /> },
  { dot: true, i: <Svg w={62} vb="0 0 60 60"><circle cx="30" cy="30" r="30" fill="#fcc944" /><path d="M30 30L4 15A30 30 0 0 1 56 15.500H30Z" fill="#d8453a" /><path d="M4 15A30 30 0 0 0 29 60L42 37L30 30Z" fill="#249a5c" /><path d="M30 15.500H56A30 30 0 0 1 29 60L43 36Z" fill="#fcc944" /><circle cx="30" cy="30" r="13.500" fill="#f5f5f5" /><circle cx="30" cy="30" r="11" fill="#4f8bf0" /></Svg> },
  { i: <Question /> },
  { i: <Svg w={60}><rect x="1" y="1" width="58" height="58" rx="5" fill="#2a2b35" stroke="#17181f" strokeWidth="2" />{[['#e3122f', 12, 4], ['#f2d21b', 20, 3], ['#e81b8d', 27, 6], ['#a6cf30', 34, 4], ['#2fb6ea', 41, 7]].map(([c, x, n]) => Array.from({ length: n }, (_, k) => <rect key={`${x}-${k}`} x={x} y={38 - k * 3.2} width="6.500" height="2.400" fill={k > 2 ? '#dfb8cf' : c} />))}</Svg> },
  { i: <Question /> },
  { dot: true, i: <span className="flex size-[60px] items-end justify-center overflow-hidden rounded-full bg-[#dfe4f8]"><Svg w={60}><path d="M14 12L22 15C27 13 33 13 38 15L46 12C48 16 48 19 47 21C52 28 50 38 38 41C37 43 38 50 38 60H22V52C16 54 14 50 12 46C15 46 18 50 22 48C22 45 22 43 23 41C10 38 8 28 13 21C12 19 12 16 14 12Z" fill="#4b2a7b" /><path d="M22 46C26 43 34 43 38 46V60H22Z" fill="#8b2fa0" /></Svg></span> },
  { dot: true, i: <Svg w={64}><path d="M3 14L14 1L34 6L40 10L52 7L60 26L58 52L40 63L22 56L6 48Z" fill="#9b4df2" /><path d="M3 14L14 1L34 6L30 18L14 28L5 38Z" fill="#f53b94" /><path d="M52 34L62 30L58 52L40 63L22 54Z" fill="#7a63f5" /><rect x="14" y="14" width="36" height="36" fill="#0c0c0c" /><text x="17" y="34" fontFamily="Inter" fontWeight="700" fontSize="20" fill="#fff">PS</text><rect x="18" y="42" width="14" height="3" fill="#fff" /></Svg> },
  { dot: true, i: <Mamp size={62} disc="#666" /> },
];

function Dock() {
  return (
    <div className="ml-[250px] flex h-[90px] w-[2060px] rounded-t-[10px] bg-[linear-gradient(to_right,#b5b4b7_0%,#bab9bc_66%,#9a9a9c_70%,#7b7e7e_77%,#6d7578_84%,#6c7679_100%)] pt-[11px] pl-[6px]">
      {dock.map(({ i, dot }, k) => (
        <span key={k} className="flex w-[72px] shrink-0 flex-col items-center">
          <span className="flex h-[62px] items-center justify-center">{i}</span>
          {dot && <span className={`mt-[5px] size-[8px] rounded-full ${k > 19 ? 'bg-black' : 'bg-[#444]'}`} />}
        </span>
      ))}
      <span className="mt-[1px] ml-[16px] h-[66px] w-[2px] bg-[#475256]" />
      <span className="ml-[14px] flex h-[64px] w-[72px] shrink-0 items-center justify-center">
        <Svg w={62} h={64}><rect x="3" y="5" width="56" height="56" fill="#b3090f" stroke="#b3090f" strokeWidth="3" strokeDasharray="4 2" /><path d="M14 3H30V6H14Z" fill="#eee" /><text x="8" y="48" fontFamily="Inter" fontWeight="800" fontStyle="italic" fontSize="42" letterSpacing="-6" fill="#fff">F<tspan dy="6">z</tspan></text></Svg>
      </span>
      <span className="flex h-[62px] w-[72px] shrink-0 items-center justify-center"><Question /></span>
      <span className="flex h-[62px] w-[72px] shrink-0 items-center justify-center">
        <Svg w={52} h={64}><defs><linearGradient id="tr"><stop offset="0" stopColor="#c9cccd" /><stop offset="0.4" stopColor="#eceded" /><stop offset="1" stopColor="#bcc1c3" /></linearGradient></defs><path d="M1 8C10 15 42 15 51 8L44 58C42 64 10 64 8 58Z" fill="url(#tr)" opacity="0.95" /><ellipse cx="26" cy="9" rx="25" ry="5" fill="#8f9799" /><path d="M5 8L10 4L16 7L24 0L30 5L38 1L41 6L47 5L46 12C36 16 16 16 6 12Z" fill="#f4f4f4" /><path d="M13 8L18 4L21 12ZM30 10L36 5L41 11ZM24 3L27 4L25 7Z" fill="#4a4a4a" /><path d="M19 7L24 9L21 12Z" fill="#27a4a0" /><path d="M33 7L36 8L34 10Z" fill="#d2572e" /></Svg>
      </span>
    </div>
  );
}

export default function App() {
  return (
    <div className="flex h-[1600px] w-[2560px] flex-col overflow-hidden bg-black font-['Inter','Noto_Sans',sans-serif]">
      <MenuBar />
      <div className="h-[2px] shrink-0 bg-black" />
      <TabStrip />
      <Toolbar />
      <Bookmarks />
      <div className="z-10 flex h-[1271px] shrink-0 flex-col font-['Liberation_Sans',Arial,sans-serif] [-webkit-text-stroke:0.4px]">
        <main className="relative h-[1196px] shrink-0 bg-white">
          <SiteNav />
          <div className="flex h-[156px] justify-between pr-[140px] pl-[140px]">
            <h1 className="mt-[59px] text-[72px] leading-[80px] tracking-[1.4px] text-[#333] [-webkit-text-stroke:1.8px]">Liste des fiches oiseaux</h1>
            <div className="mt-[20px] flex h-[46px] w-[332px] items-center border-b-4 border-[#6495ed] text-[28px] text-[#777]">
              <span className="ml-[2px] w-[270px] tracking-[-0.1px] whitespace-nowrap">Rechercher une fiche</span>
              <FaSearch className="ml-[1px] h-[27px] w-[27px]" />
            </div>
          </div>
          <div className="ml-[1086px] size-[240px] rotate-[151deg] rounded-full border-[32px] border-[#f3f3f3] border-t-[#3498db]" />
          <div className="ml-[1162px] h-[40px] text-[28px] leading-[40px] tracking-[0.19px] text-[#428bca]">Voir plus d'oiseaux</div>
          <SiteFooter />
          <AjaxPanel />
        </main>
        <DebugBar />
      </div>
      <div className="-mt-px flex h-[90px] shrink-0">
        <div className="flex w-[20px] bg-linear-to-b from-[#3e3e3c] to-[#7d7d7a]" />
        <div className="w-[131px] bg-linear-to-b from-[#4c4c4c] to-[#dcdcdc]" />
        <div className="w-[99px] bg-linear-to-b from-[#6a6a6a] to-[#f0f0f0]">
          <div className="mt-[4px] h-[4px] bg-[#08283f]" />
          <div className="mt-[62px] h-[20px] overflow-hidden pt-[2px] pl-[85px] font-['Liberation_Sans'] text-[28px] leading-[34px] text-[#222]">N</div>
        </div>
        <div className="z-20 -ml-[250px]"><Dock /></div>
        <div className="grow bg-linear-to-b from-[#0b1112] via-[#273335] to-[#43514f]" />
      </div>
    </div>
  );
}
